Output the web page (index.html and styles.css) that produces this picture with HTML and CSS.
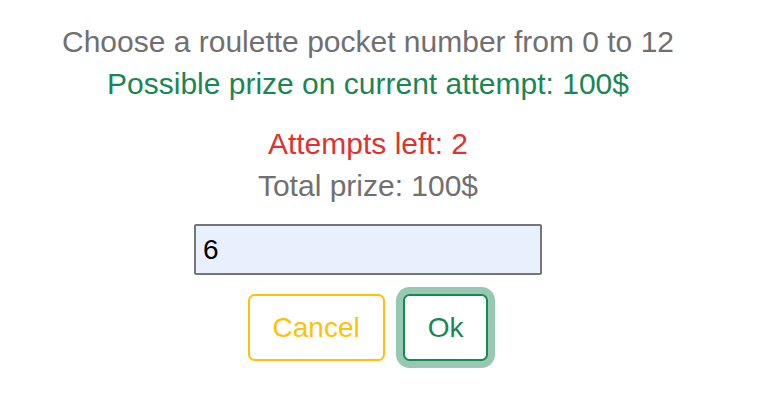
FILE: index.html
```html
<!DOCTYPE html>
<html lang="en">
<head>
<meta charset="utf-8">
<title>Roulette</title>
<link rel="stylesheet" href="styles.css">
</head>
<body>
<div class="app">
  <p class="line muted">Choose a roulette pocket number from 0 to 12</p>
  <p class="line success">Possible prize on current attempt: 100$</p>
  <div class="stats">
    <p class="line danger">Attempts left: 2</p>
    <p class="line muted">Total prize: 100$</p>
  </div>
  <input class="guess" type="text" value="6">
  <div class="actions">
    <button class="btn btn-cancel" type="button">Cancel</button>
    <button class="btn btn-ok" type="button">Ok</button>
  </div>
</div>
</body>
</html>
```
FILE: styles.css
```css
html, body {
  margin: 0;
  padding: 0;
  background: #ffffff;
}
body {
  font-family: "Liberation Sans", Arial, sans-serif;
  font-size: 30px;
  line-height: 42px;
}
.app {
  width: 736px;
  padding-top: 21px;
  padding-bottom: 40px;
  display: flex;
  flex-direction: column;
  align-items: center;
}
.line {
  margin: 0;
  text-align: center;
}
.muted { color: #707070; }
.success { color: #198754; }
.danger { color: #e0332f; }
.stats {
  margin-top: 18px;
  display: flex;
  flex-direction: column;
  align-items: center;
}
.guess {
  margin-top: 17px;
  box-sizing: border-box;
  width: 348px;
  height: 51px;
  border: 2px solid #767676;
  border-radius: 2px;
  background: #e8f0fe;
  color: #000;
  font-family: "Liberation Sans", Arial, sans-serif;
  font-size: 28px;
  padding: 0 7px;
  outline: none;
}
.actions {
  margin-top: 19px;
  display: flex;
  gap: 18px;
}
.btn {
  font-family: "Liberation Sans", Arial, sans-serif;
  font-size: 28px;
  line-height: 42px;
  padding: 10.5px 23px;
  border: 2px solid;
  border-radius: 6.5px;
  background: #fff;
  cursor: pointer;
}
.btn-cancel {
  color: #ffc107;
  border-color: #ffc107;
}
.btn-ok {
  color: #198754;
  border-color: #198754;
  box-shadow: 0 0 0 7px rgba(25, 135, 84, 0.45);
}
```
